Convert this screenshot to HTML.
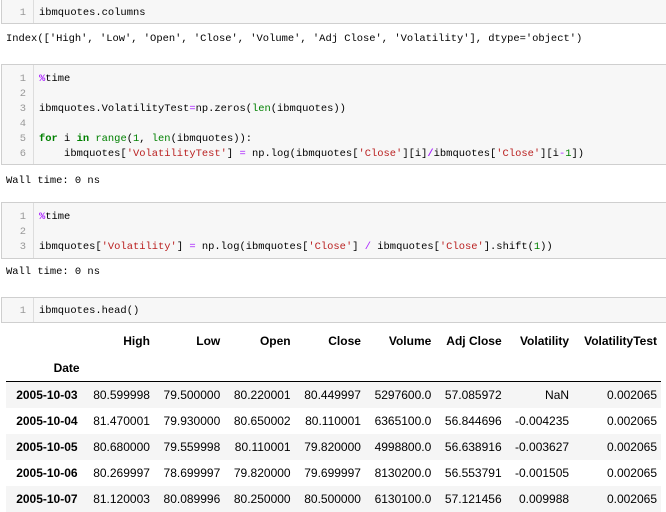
<!DOCTYPE html>
<html><head><meta charset="utf-8"><style>
body{margin:0;width:666px;height:512px;background:#fff;position:relative;overflow:hidden;font-family:"Liberation Mono","Noto Sans CJK SC",monospace;}
.cell{position:absolute;left:1px;width:680px;background:#f7f7f7;border:1px solid #cfcfcf;box-sizing:border-box;}
.gut{position:absolute;left:0;top:0;bottom:0;width:31px;border-right:1px solid #ddd;}
.ln{position:absolute;left:0;width:24px;text-align:right;color:#999;font-size:10.45px;}
.code{position:absolute;left:37px;font-size:10.45px;color:#000;white-space:pre;}
.out{position:absolute;left:6px;font-size:10.45px;white-space:pre;color:#000;}
.k{color:#008000;font-weight:bold}.b{color:#008000}.s{color:#ba2121}.o{color:#aa22ff}.m{color:#aa22ff;font-weight:bold}.n{color:#008000}
table{position:absolute;left:6px;top:327px;border-collapse:collapse;font-family:"Liberation Sans",Arial,sans-serif;font-size:12px;width:655px;}
td,th{text-align:right;padding:0 4px;white-space:nowrap;}
thead th{height:27px;font-weight:bold}
tbody tr{height:26px}
tbody tr:nth-child(odd){background:#f5f5f5}
tbody th{font-weight:bold;padding-right:6px}
thead{border-bottom:1px solid #000}
</style></head><body>
<div class="cell" style="top:-2px;height:26px"><div class="gut"></div><div class="ln" style="top:8px">1</div><div class="code" style="top:8px">ibmquotes.columns</div></div>
<div class="out" style="top:33px">Index(['High', 'Low', 'Open', 'Close', 'Volume', 'Adj Close', 'Volatility'], dtype='object')</div>
<div class="cell" style="top:64px;height:101px"><div class="gut"></div>
<div class="ln" style="top:7px;line-height:15px">1<br>2<br>3<br>4<br>5<br>6</div>
<div class="code" style="top:7px;line-height:15px"><span class="m">%</span>time

ibmquotes.VolatilityTest<span class="o">=</span>np.zeros(<span class="b">len</span>(ibmquotes))

<span class="k">for</span> i <span class="k">in</span> <span class="b">range</span>(<span class="n">1</span>, <span class="b">len</span>(ibmquotes)):
    ibmquotes[<span class="s">'VolatilityTest'</span>] <span class="o">=</span> np.log(ibmquotes[<span class="s">'Close'</span>][i]<span class="m">/</span>ibmquotes[<span class="s">'Close'</span>][i<span class="o">-</span><span class="n">1</span>])</div></div>
<div class="out" style="top:175px">Wall time: 0 ns</div>
<div class="cell" style="top:202px;height:57px"><div class="gut"></div>
<div class="ln" style="top:7px;line-height:15px">1<br>2<br>3</div>
<div class="code" style="top:7px;line-height:15px"><span class="m">%</span>time

ibmquotes[<span class="s">'Volatility'</span>] <span class="o">=</span> np.log(ibmquotes[<span class="s">'Close'</span>] <span class="o">/</span> ibmquotes[<span class="s">'Close'</span>].shift(<span class="n">1</span>))</div></div>
<div class="out" style="top:266px">Wall time: 0 ns</div>
<div class="cell" style="top:297px;height:26px"><div class="gut"></div><div class="ln" style="top:7px">1</div><div class="code" style="top:7px">ibmquotes.head()</div></div>
<table>
<thead><tr><th></th><th>High</th><th>Low</th><th>Open</th><th>Close</th><th>Volume</th><th>Adj Close</th><th>Volatility</th><th>VolatilityTest</th></tr>
<tr><th>Date</th><th></th><th></th><th></th><th></th><th></th><th></th><th></th><th></th></tr></thead>
<tbody>
<tr><th>2005-10-03</th><td>80.599998</td><td>79.500000</td><td>80.220001</td><td>80.449997</td><td>5297600.0</td><td>57.085972</td><td>NaN</td><td>0.002065</td></tr>
<tr><th>2005-10-04</th><td>81.470001</td><td>79.930000</td><td>80.650002</td><td>80.110001</td><td>6365100.0</td><td>56.844696</td><td>-0.004235</td><td>0.002065</td></tr>
<tr><th>2005-10-05</th><td>80.680000</td><td>79.559998</td><td>80.110001</td><td>79.820000</td><td>4998800.0</td><td>56.638916</td><td>-0.003627</td><td>0.002065</td></tr>
<tr><th>2005-10-06</th><td>80.269997</td><td>78.699997</td><td>79.820000</td><td>79.699997</td><td>8130200.0</td><td>56.553791</td><td>-0.001505</td><td>0.002065</td></tr>
<tr><th>2005-10-07</th><td>81.120003</td><td>80.089996</td><td>80.250000</td><td>80.500000</td><td>6130100.0</td><td>57.121456</td><td>0.009988</td><td>0.002065</td></tr>
</tbody></table>
</body></html>
